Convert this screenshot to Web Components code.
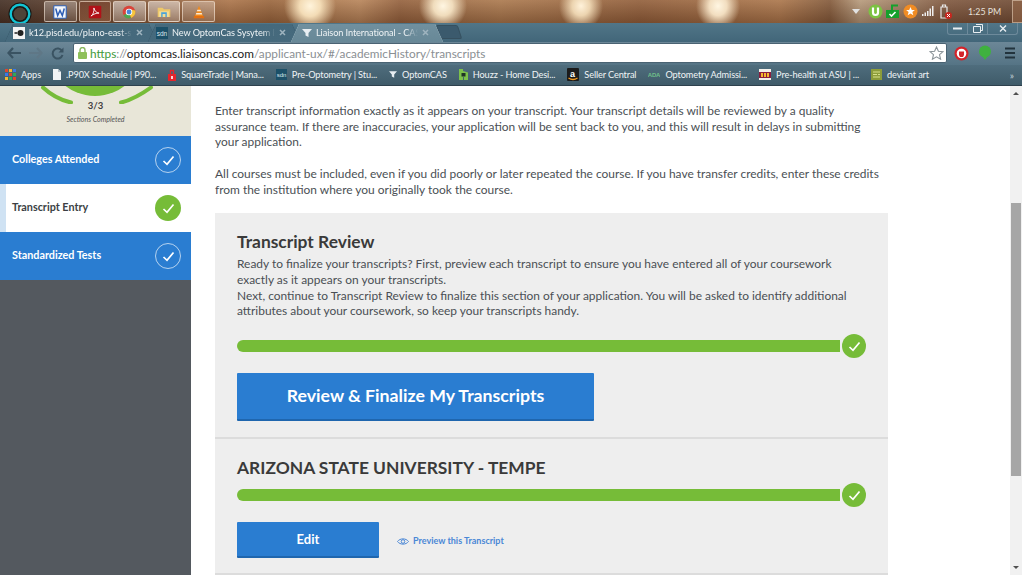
<!DOCTYPE html>
<html>
<head>
<meta charset="utf-8">
<title>Transcripts</title>
<style>
  html, body { margin: 0; height: 100%; overflow: hidden; background: #fff; }
  body { display: flex; flex-direction: column; width: 1022px; height: 575px; font-family: Lato, "Noto Sans", sans-serif; }
  svg { display: block; }
</style>
</head>
<body>

<os-taskbar>
  <task-button slot="apps">
    <svg viewBox="0 0 18 18"><rect x="1" y="1" width="16" height="16" rx="1" fill="#f4f6fa"/><rect x="1" y="1" width="16" height="16" rx="1" fill="none" stroke="#2f5fb3" stroke-width="1.4"/><path d="M3.5 4.5 6 13.5 9 7l3 6.5 2.5-9" fill="none" stroke="#2b5cb5" stroke-width="1.9"/></svg>
  </task-button>
  <task-button slot="apps" tone="dark">
    <svg viewBox="0 0 19 19"><rect x="1" y="1" width="17" height="17" rx="1.5" fill="#b11218"/><path d="M4 15c3-2 4.500-6 4-11 1 4 3 6.500 7 7-4 0-7 1-11 4z" fill="none" stroke="#fff" stroke-width="1.2"/></svg>
  </task-button>
  <task-button slot="apps" tone="light">
    <svg viewBox="0 0 20 20"><circle cx="10" cy="10" r="9" fill="#d9443a"/><path d="M10 10 2.200 14.500A9 9 0 0 0 13 18.500z" fill="#4ba74f"/><path d="M10 10l3 8.500A9 9 0 0 0 18.900 8L10 6z" fill="#f4c63d"/><circle cx="10" cy="10" r="4.600" fill="#fff"/><circle cx="10" cy="10" r="3.500" fill="#4a86d8"/></svg>
  </task-button>
  <task-button slot="apps" tone="light">
    <svg viewBox="0 0 20 18"><path d="M1 3h7l2 2h9v11H1z" fill="#eec86a"/><path d="M3 8h14v8H3z" fill="#f4dd96"/><path d="M6 16V9.500h8V16h-2v-4H8v4z" fill="#4aa3d8"/></svg>
  </task-button>
  <task-button slot="apps">
    <svg viewBox="0 0 18 19"><path d="M9 1 14.500 15h-11z" fill="#f08a1d"/><path d="M6.800 6.500h4.400l.7 2H6.100zM5.300 10.800h7.400l.7 2H4.600z" fill="#fbe7d0"/><rect x="2" y="15" width="14" height="3" rx=".7" fill="#e36f12"/></svg>
  </task-button>

  <svg slot="tray" width="8" height="5" viewBox="0 0 8 5" style="margin-right:8px"><path d="M0 0h8L4 5z" fill="#e2e2e2"/></svg>
  <svg slot="tray" width="15" height="15" viewBox="0 0 15 15" style="margin-right:2px"><circle cx="7.500" cy="7.500" r="7" fill="#7cc242"/><path d="M5 3.500v5a2.500 2.500 0 0 0 5 0v-5" fill="none" stroke="#fff" stroke-width="2.200"/></svg>
  <svg slot="tray" width="15" height="15" viewBox="0 0 15 15" style="margin-right:3px"><path d="M1 6h13v8H1z" fill="#16a02c"/><path d="M7 6V1.500h6" fill="none" stroke="#16a02c" stroke-width="2"/><path d="M4.500 10l2 2 4-4" fill="none" stroke="#fff" stroke-width="1.600"/></svg>
  <svg slot="tray" width="15" height="15" viewBox="0 0 15 15" style="margin-right:4px"><circle cx="7.500" cy="7.500" r="7" fill="#f08c24"/><path d="M7.500 3l1.300 3h3.100l-2.500 2 .9 3.200-2.800-1.800-2.800 1.800.9-3.200-2.500-2h3.100z" fill="#fff"/></svg>
  <svg slot="tray" width="12" height="10" viewBox="0 0 12 10" style="margin-right:4px"><path d="M0 8h1.500v2H0zM2.500 6.500H4V10H2.500zM5 5h1.500v5H5zM7.500 2.500H9V10H7.500zM10 0h1.500v10H10z" fill="#eee"/></svg>
  <svg slot="tray" width="14" height="15" viewBox="0 0 14 15" style="margin-right:16px"><path d="M3 3h6v11H3zM4.500 1h3v2h-3z" fill="none" stroke="#e8e8e8" stroke-width="1.200"/><circle cx="10.500" cy="11.500" r="3.500" fill="#c8261e"/><path d="M9 10l3 3m0-3-3 3" stroke="#fff" stroke-width="1"/></svg>
  <span slot="clock">1:25 PM</span>
</os-taskbar>

<chrome-frame>
  <chrome-tab slot="tabs">
    <svg slot="icon" width="12" height="12" viewBox="0 0 12 12"><rect width="12" height="12" fill="#f4f4f4"/><circle cx="7.500" cy="6" r="3" fill="#222"/><rect x="1.500" y="5" width="3" height="2" fill="#555"/></svg>
    k12.pisd.edu/plano-east-s
  </chrome-tab>
  <chrome-tab slot="tabs">
    <svg slot="icon" width="12" height="12" viewBox="0 0 12 12"><rect width="12" height="12" fill="#1c5068"/><text x="6" y="8.500" font-size="6.500" font-family="Liberation Sans" fill="#dce8ee" text-anchor="middle">sdn</text></svg>
    New OptomCas Sysytem I
  </chrome-tab>
  <chrome-tab slot="tabs" active>
    <svg slot="icon" width="10" height="10" viewBox="0 0 10 10"><path d="M0 1h10L6.500 5v4L3.500 7.500V5z" fill="#e8eef2"/></svg>
    Liaison International - CAS
  </chrome-tab>

  <svg slot="back" width="14" height="12" viewBox="0 0 14 12"><path d="M6 1 1.500 6 6 11M2 6h12" fill="none" stroke="#3a5362" stroke-width="2.200"/></svg>
  <svg slot="back" width="14" height="12" viewBox="0 0 14 12"><path d="M8 1l4.500 5L8 11M12 6H0" fill="none" stroke="#5f7786" stroke-width="2.200"/></svg>
  <svg slot="back" width="13" height="13" viewBox="0 0 13 13"><path d="M11 4A5 5 0 1 0 11.500 8" fill="none" stroke="#3a5362" stroke-width="2"/><path d="M12.500 .5v5h-5z" fill="#3a5362"/></svg>

  <url-bar slot="url"></url-bar>

  <svg slot="ext" width="15" height="15" viewBox="0 0 15 15" style="margin-right:9px"><circle cx="7.500" cy="7.500" r="7" fill="#d3232a"/><circle cx="7.500" cy="7.500" r="4.800" fill="#fff"/><path d="M5 5.500h5V9l-1 2H6L5 9z" fill="#d3232a"/></svg>
  <svg slot="ext" width="14" height="16" viewBox="0 0 14 16" style="margin-right:12px"><circle cx="7" cy="6.500" r="6" fill="#3fb13f"/><path d="M5 12h4l-2 3z" fill="#3fb13f"/></svg>
  <svg slot="ext" width="12" height="12" viewBox="0 0 12 12"><path d="M1 1.500h10M1 6h10M1 10.500h10" stroke="#22333d" stroke-width="2"/></svg>

  <bookmark-item slot="marks">
    <svg slot="icon" width="11" height="11" viewBox="0 0 11 11"><path d="M0 0h3v3H0z" fill="#e0452c"/><path d="M4 0h3v3H4z" fill="#f2b632"/><path d="M8 0h3v3H8z" fill="#3b78e7"/><path d="M0 4h3v3H0z" fill="#3b78e7"/><path d="M4 4h3v3H4z" fill="#e0452c"/><path d="M8 4h3v3H8z" fill="#35a853"/><path d="M0 8h3v3H0z" fill="#f2b632"/><path d="M4 8h3v3H4z" fill="#35a853"/><path d="M8 8h3v3H8z" fill="#e0452c"/></svg>
    Apps
  </bookmark-item>
  <bookmark-item slot="marks">
    <svg slot="icon" width="8" height="11" viewBox="0 0 8 11"><path d="M0 0h5l3 3v8H0z" fill="#f2f4f5"/><path d="M5 0v3h3z" fill="#b8c2c8"/></svg>
    .P90X Schedule | P90...
  </bookmark-item>
  <bookmark-item slot="marks">
    <svg slot="icon" width="8" height="12" viewBox="0 0 8 12"><path d="M2.500 5V1.500h3V5" fill="none" stroke="#e5262c" stroke-width="1.400"/><rect y="5" width="8" height="7" fill="#e5262c"/><rect x="3" y="7" width="2" height="3" fill="#fbd5d5"/></svg>
    SquareTrade | Mana...
  </bookmark-item>
  <bookmark-item slot="marks">
    <svg slot="icon" width="11" height="11" viewBox="0 0 11 11"><rect width="11" height="11" fill="#1c5068"/><text x="5.500" y="8" font-size="6" font-family="Liberation Sans" fill="#dce8ee" text-anchor="middle">sdn</text></svg>
    Pre-Optometry | Stu...
  </bookmark-item>
  <bookmark-item slot="marks">
    <svg slot="icon" width="8" height="9" viewBox="0 0 10 10"><path d="M0 1h10L6.500 5v4L3.500 7.500V5z" fill="#e8eef2"/></svg>
    OptomCAS
  </bookmark-item>
  <bookmark-item slot="marks">
    <svg slot="icon" width="9" height="13" viewBox="0 0 9 13"><path d="M0 1h4v2l5 1.500V12H5V9H4v3H0z" fill="#7cc04b"/><rect x="2.500" y="5" width="4" height="3.500" fill="#1f3324"/></svg>
    Houzz - Home Desi...
  </bookmark-item>
  <bookmark-item slot="marks">
    <svg slot="icon" width="12" height="13" viewBox="0 0 12 13"><rect width="12" height="13" rx="1" fill="#1b1b1b"/><text x="5.500" y="8.500" font-size="9" font-weight="700" font-family="Liberation Sans" fill="#fff" text-anchor="middle">a</text><path d="M1.500 10c3 2 6 2 9 0" fill="none" stroke="#f29a1f" stroke-width="1.300"/></svg>
    Seller Central
  </bookmark-item>
  <bookmark-item slot="marks">
    <svg slot="icon" width="12" height="7" viewBox="0 0 12 7"><text x="6" y="6" font-size="6" font-weight="700" font-family="Liberation Sans" fill="#6fbf8a" text-anchor="middle">ADA</text></svg>
    Optometry Admissi...
  </bookmark-item>
  <bookmark-item slot="marks">
    <svg slot="icon" width="12" height="11" viewBox="0 0 12 11"><rect width="12" height="11" fill="#f4f0ea"/><rect y="3" width="12" height="6" fill="#8c1d40"/><path d="M2 4h2v4H2zM5 4h2v4H5zM8 4h2v4H8z" fill="#f5b82e"/></svg>
    Pre-health at ASU | ...
  </bookmark-item>
  <bookmark-item slot="marks">
    <svg slot="icon" width="11" height="11" viewBox="0 0 11 11"><rect width="11" height="11" fill="#8c9c3a"/><path d="M2 3h7M2 5.500h4M7 5.500h2M2 8h7" stroke="#d6e08a" stroke-width="1"/></svg>
    deviant art
  </bookmark-item>
</chrome-frame>

<app-shell>
  <side-nav slot="side">
    <nav-item state="done">Colleges Attended</nav-item>
    <nav-item state="current">Transcript Entry</nav-item>
    <nav-item state="done">Standardized Tests</nav-item>
  </side-nav>

  <intro-text>
    <p>Enter transcript information exactly as it appears on your transcript. Your transcript details will be reviewed by a quality assurance team. If there are inaccuracies, your application will be sent back to you, and this will result in delays in submitting your application.</p>
    <p>All courses must be included, even if you did poorly or later repeated the course. If you have transfer credits, enter these credits from the institution where you originally took the course.</p>
  </intro-text>

  <review-card>
    <card-section kind="review">
      <h2 slot="title">Transcript Review</h2>
      <span slot="body">Ready to finalize your transcripts? First, preview each transcript to ensure you have entered all of your coursework exactly as it appears on your transcripts.<br>Next, continue to Transcript Review to finalize this section of your application. You will be asked to identify additional attributes about your coursework, so keep your transcripts handy.</span>
      <blue-button slot="action" size="big">Review &amp; Finalize My Transcripts</blue-button>
    </card-section>
    <card-section kind="school">
      <h2 slot="title">ARIZONA STATE UNIVERSITY - TEMPE</h2>
      <blue-button slot="action" size="small">Edit</blue-button>
      <preview-link slot="action">Preview this Transcript</preview-link>
    </card-section>
  </review-card>
</app-shell>

<script>
// all components just stamp a template into an open shadow root
function comp(name, html) {
  const template = document.createElement('template');
  template.innerHTML = html;
  customElements.define(name, class extends HTMLElement {
    constructor() {
      super();
      this.attachShadow({ mode: 'open' });
      this.shadowRoot.appendChild(template.content.cloneNode(true));
    }
  });
}

const CHECK = `<svg width="13" height="11" viewBox="0 0 13 11"><path d="M1.500 6 5 9.300 11.500 1.500" fill="none" stroke="#fff" stroke-width="1.700"/></svg>`;

comp('os-taskbar', `
  <style>
    :host {
      display: flex;
      align-items: center;
      flex: none;
      height: 23px;
      background:
        radial-gradient(ellipse 26px 26px at 310px 6px, #fff4dc 0, #f3dcb6 40%, transparent 100%),
        radial-gradient(ellipse 24px 24px at 443px 6px, #fff6e2 0, #f0dcbc 40%, transparent 100%),
        radial-gradient(ellipse 22px 24px at 581px 6px, #fff2da 0, #ecd4b0 40%, transparent 100%),
        radial-gradient(ellipse 22px 24px at 718px 6px, #fff6e2 0, #f2dec0 40%, transparent 100%),
        linear-gradient(to bottom, rgba(255,225,190,.12), rgba(60,30,10,.3)),
        linear-gradient(to right, #3d2c25 0, #4d362b 40px, #7a5238 130px, #a9744c 230px, #97653f 270px, #b5845c 360px, #91603f 400px, #a87850 500px, #8e5d3c 640px, #a8754d 780px, #7f583c 830px, #b49b80 860px, #7a5540 950px, #6a4936 1022px);
    }
    .orb { flex: none; width: 40px; display: flex; justify-content: center; margin-top: 5px; }
    .apps { display: flex; gap: 2px; margin-left: 4px; align-self: flex-start; padding-top: 1px; }
    .tray { margin-left: auto; display: flex; align-items: center; padding-bottom: 1px; }
    .clock { flex: none; width: 43px; font: 8.800px Lato, sans-serif; color: #e6e0d8; }
    .desk { width: 9px; height: 21px; margin-left: 1px; border: 1px solid rgba(255,240,220,.45); border-right: 0; background: rgba(150,105,75,.6); }
  </style>
  <div class="orb">
    <svg width="24" height="24" viewBox="0 0 24 24"><circle cx="12" cy="12" r="11.500" fill="#1a1714"/><circle cx="12" cy="12" r="9.300" fill="none" stroke="#12c4d4" stroke-width="2.400"/><circle cx="12" cy="12" r="6.500" fill="#4d4338"/></svg>
  </div>
  <div class="apps"><slot name="apps"></slot></div>
  <div class="tray"><slot name="tray"></slot><div class="clock"><slot name="clock"></slot></div><div class="desk"></div></div>
`);

comp('task-button', `
  <style>
    :host {
      display: flex;
      align-items: center;
      justify-content: center;
      box-sizing: border-box;
      width: 32.600px;
      height: 21px;
      border: 1px solid rgba(255,240,225,.55);
      border-radius: 2px;
      background: linear-gradient(rgba(255,255,255,.3), rgba(255,255,255,.12));
    }
    :host([tone=dark]) { background: linear-gradient(rgba(120,60,40,.5), rgba(160,100,70,.5)); }
    :host([tone=light]) { background: linear-gradient(rgba(255,255,255,.5), rgba(255,255,255,.25)); }
    ::slotted(svg) { width: 14px; height: 14px; }
  </style>
  <slot></slot>
`);

comp('chrome-frame', `
  <style>
    :host { display: block; flex: none; height: 63px; background: #48697d; color: #f0f4f6; }
    .strip {
      display: flex;
      align-items: flex-end;
      height: 19px;
      padding-left: 5px;
      background: linear-gradient(#517688, #426679);
    }
    .newtab {
      width: 20px; height: 12px; margin: 0 0 3px 4px;
      background: #3b5a6d;
      transform: skewX(18deg);
      border: 1px solid #36505f;
      border-radius: 2px;
    }
    .winbtns {
      display: flex;
      margin-left: auto;
      margin-right: 4px;
      align-self: flex-start;
      height: 11px;
      border: 1px solid #6d8a9b;
      border-top: 0;
      border-radius: 0 0 3px 3px;
    }
    .winbtns div { display: flex; align-items: center; justify-content: center; width: 19px; border-right: 1px solid #6d8a9b; }
    .winbtns div:last-child { width: 29px; border: 0; }
    .tools {
      display: flex;
      align-items: center;
      box-sizing: border-box;
      height: 23px;
      padding: 0 6px 1px 6px;
      background: linear-gradient(#6c8797, #557485);
    }
    .back { display: flex; align-items: center; gap: 8px; width: 66px; padding-left: 1px; }
    .ext { display: flex; align-items: center; margin-left: 7px; }
    .marks {
      display: flex;
      align-items: center;
      box-sizing: border-box;
      height: 21px;
      padding: 0 0 1px 5px;
      gap: 12px;
      background: linear-gradient(#4f6d7d, #3f5b69);
      border-bottom: 1px solid #2e414d;
    }
    .more { margin-left: auto; margin-right: 8px; color: #c4d0d6; font: 10px Lato, sans-serif; }
  </style>
  <div class="strip">
    <slot name="tabs"></slot>
    <div class="newtab"></div>
    <div class="winbtns">
      <div><svg width="9" height="3" viewBox="0 0 9 3"><rect width="9" height="2" y=".5" fill="#e8eef2"/></svg></div>
      <div><svg width="10" height="9" viewBox="0 0 10 9"><path d="M3 .5h6.500v6H7.500M.5 2.500h7v6h-7z" fill="none" stroke="#e8eef2"/></svg></div>
      <div><svg width="8" height="7" viewBox="0 0 8 7"><path d="M1 .5l6 6m0-6-6 6" stroke="#e8eef2" stroke-width="1.400"/></svg></div>
    </div>
  </div>
  <div class="tools">
    <div class="back"><slot name="back"></slot></div>
    <slot name="url"></slot>
    <div class="ext"><slot name="ext"></slot></div>
  </div>
  <div class="marks">
    <slot name="marks"></slot>
    <span class="more">»</span>
  </div>
`);

comp('chrome-tab', `
  <style>
    :host {
      display: block;
      flex: none;
      width: 152px;
      height: 18px;
      margin-right: -9px;
      filter: drop-shadow(0 0 .6px #2b4453);
    }
    .shape {
      display: flex;
      align-items: center;
      box-sizing: border-box;
      height: 100%;
      padding: 0 14px 1px 8px;
      gap: 4px;
      clip-path: polygon(0 100%, 8px 0, calc(100% - 8px) 0, 100% 100%);
      background: linear-gradient(#45697c, #466a7d);
    }
    :host([active]) { z-index: 2; filter: drop-shadow(0 0 .6px #d6e2e8); }
    :host([active]) .shape { background: linear-gradient(#70909f, #678897); padding-left: 11px; }
    .label {
      flex: 1;
      min-width: 0;
      white-space: nowrap;
      overflow: hidden;
      font: 9.200px Lato, sans-serif;
      letter-spacing: -.1px;
      color: #eef3f5;
      -webkit-mask-image: linear-gradient(to right, #000 88%, transparent);
      mask-image: linear-gradient(to right, #000 88%, transparent);
    }
    .x { flex: none; }
  </style>
  <div class="shape">
    <slot name="icon"></slot>
    <span class="label"><slot></slot></span>
    <svg class="x" width="7" height="7" viewBox="0 0 7 7"><path d="M1 1l5 5m0-5-5 5" stroke="#9fb4bf" stroke-width="1.500"/></svg>
  </div>
`);

comp('url-bar', `
  <style>
    :host {
      display: flex;
      align-items: center;
      flex: 1;
      box-sizing: border-box;
      height: 20px;
      padding: 0 2px 0 4px;
      background: #fff;
      border: 1px solid #4a6373;
      border-radius: 2px;
      font: 11.800px Lato, sans-serif;
      white-space: nowrap;
      color: #8a8f93;
    }
    .lock { margin-right: 3px; }
    .https { color: #3f9a3a; }
    .dom { color: #222; }
    .star { margin-left: auto; }
  </style>
  <svg class="lock" width="9" height="12" viewBox="0 0 9 12"><path d="M2 5.500V3a2.500 2.500 0 0 1 5 0v2.500" fill="none" stroke="#88b860" stroke-width="1.400"/><rect y="5" width="9" height="7" rx="1" fill="#8ec05a"/></svg>
  <span><span class="https">https</span>://<span class="dom">optomcas.liaisoncas.com</span>/applicant-ux/#/academicHistory/transcripts</span>
  <svg class="star" width="15" height="14" viewBox="0 0 15 14"><path d="M7.500 1l1.900 4.300 4.600.4-3.500 3 1.100 4.500-4.100-2.400-4.100 2.400 1.100-4.500-3.500-3 4.600-.4z" fill="#fff" stroke="#8b9499" stroke-width="1.100"/></svg>
`);

comp('bookmark-item', `
  <style>
    :host { display: flex; align-items: center; gap: 5px; white-space: nowrap; font: 9.200px Lato, sans-serif; letter-spacing: -.12px; color: #f0f4f6; }
  </style>
  <slot name="icon"></slot>
  <span><slot></slot></span>
`);

comp('app-shell', `
  <style>
    :host { display: flex; flex: 1; min-height: 0; overflow: hidden; }
    .side { flex: none; width: 191px; display: flex; }
    .main { flex: 1; min-width: 0; padding: 17px 0 0 24px; overflow: hidden; }
    .bar { flex: none; width: 12px; display: flex; flex-direction: column; align-items: center; background: #f1f1f1; }
    .bar i { display: block; flex: none; width: 0; height: 0; border: 3px solid transparent; }
    .up { border-bottom: 3px solid #505050 !important; border-top: 0 !important; margin: 6px 0 108px; }
    .thumb { flex: none; width: 10px; height: 273px; background: #a6a6a6; }
    .down { border-top: 3px solid #505050 !important; border-bottom: 0 !important; margin-top: 90px; }
  </style>
  <div class="side"><slot name="side"></slot></div>
  <div class="main"><slot></slot></div>
  <div class="bar"><i class="up"></i><div class="thumb"></div><i class="down"></i></div>
`);

comp('side-nav', `
  <style>
    :host { display: flex; flex-direction: column; width: 191px; background: #54595f; }
    .sum { height: 50px; flex: none; background: #e8e6d8; text-align: center; color: #3f3f3f; overflow: hidden; }
    .sum svg { display: block; }
    .count { font: 700 9.500px Lato, sans-serif; margin-top: -4px; line-height: 12px; }
    .note { font: italic 7.100px Lato, sans-serif; margin-top: 3px; line-height: 10px; color: #555; }
  </style>
  <div class="sum">
    <svg width="191" height="18" viewBox="0 0 191 18">
      <circle cx="95" cy="-38.500" r="48.500" fill="#76bc38"/>
      <path d="M43 1.500C50 8 60 14 71 16.500M121 16.500C132 14 142 8 151 1.500" fill="none" stroke="#76bc38" stroke-width="4" stroke-linecap="round"/>
    </svg>
    <div class="count">3/3</div>
    <div class="note">Sections Completed</div>
  </div>
  <slot></slot>
`);

comp('nav-item', `
  <style>
    :host {
      display: flex;
      align-items: center;
      justify-content: space-between;
      flex: none;
      box-sizing: border-box;
      height: 48px;
      padding: 0 10px 0 12px;
      background: #2a7dd1;
      color: #fff;
      font: 700 10.800px Lato, sans-serif;
    }
    :host([state=current]) { background: #fff; color: #3b3f44; box-shadow: inset 6px 0 #cfe2f3; }
    .label { margin-top: -3px; }
    .dot {
      display: flex;
      align-items: center;
      justify-content: center;
      box-sizing: border-box;
      width: 26px;
      height: 26px;
      border-radius: 50%;
      border: 1px solid rgba(255,255,255,.65);
    }
    :host([state=current]) .dot { background: #76bc38; border: 0; }
  </style>
  <span class="label"><slot></slot></span>
  <span class="dot">${CHECK}</span>
`);

comp('intro-text', `
  <style>
    :host { display: block; width: 668px; font: 11.950px/15.700px Lato, sans-serif; color: #4a4f54; margin-bottom: 16px; }
    ::slotted(p) { margin: 0 0 15.700px; }
  </style>
  <slot></slot>
`);

comp('review-card', `
  <style>
    :host { display: block; width: 673px; background: #eee; }
  </style>
  <slot></slot>
`);

comp('progress-row', `
  <style>
    :host { display: flex; align-items: center; height: 24px; }
    .track { flex: none; width: 603px; height: 12px; background: #76bc38; border-radius: 6px 0 0 6px; }
    .dot {
      flex: none;
      display: flex;
      align-items: center;
      justify-content: center;
      box-sizing: border-box;
      width: 24px;
      height: 24px;
      margin-left: 2px;
      border-radius: 50%;
      background: #76bc38;
    }
  </style>
  <div class="track"></div>
  <div class="dot">${CHECK}</div>
`);

comp('card-section', `
  <style>
    :host { display: block; box-sizing: border-box; padding: 17px 22px 0; border-bottom: 2px solid #dcdcdc; }
    :host([kind=review]) { height: 226px; margin-bottom: 2px; }
    :host([kind=school]) { height: 134px; padding-top: 15px; }
    ::slotted(h2) { margin: 0; font: 700 17.400px/24px Lato, sans-serif; color: #3a3a3a; }
    .body { display: block; width: 616px; font: 11.950px/15.700px Lato, sans-serif; color: #4a4f54; }
    :host([kind=review]) .body { margin-top: 2px; }
    progress-row { margin-top: 15px; }
    :host([kind=school]) progress-row { margin-top: 3px; }
    .act { display: flex; align-items: center; margin-top: 15px; }
  </style>
  <slot name="title"></slot>
  <div class="body"><slot name="body"></slot></div>
  <progress-row></progress-row>
  <div class="act"><slot name="action"></slot></div>
`);

comp('blue-button', `
  <style>
    :host {
      display: flex;
      align-items: center;
      justify-content: center;
      box-sizing: border-box;
      background: #2a7dd1;
      border-bottom: 2px solid #1f66ae;
      border-radius: 1px;
      color: #fff;
      font: 700 17.700px Lato, sans-serif;
    }
    :host([size=big]) { width: 357px; height: 48px; padding-bottom: 2px; }
    :host([size=small]) { width: 142px; height: 36px; font-size: 13px; }
  </style>
  <slot></slot>
`);

comp('preview-link', `
  <style>
    :host { display: flex; align-items: center; gap: 4px; margin-left: 18px; color: #4a87d6; font: 700 9px Lato, sans-serif; }
    svg { margin-top: 2px; }
  </style>
  <svg width="12" height="9" viewBox="0 0 12 9"><path d="M.5 4.500C3 1 9 1 11.500 4.500 9 8 3 8 .5 4.500z" fill="none" stroke="#4a87d6"/><circle cx="6" cy="4.500" r="1.800" fill="none" stroke="#4a87d6"/></svg>
  <slot></slot>
`);
</script>
</body>
</html>
